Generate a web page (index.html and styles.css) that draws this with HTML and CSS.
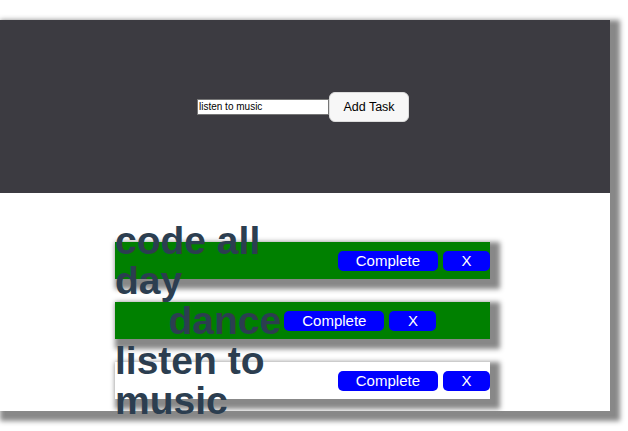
FILE: index.html
```html
<!DOCTYPE html>
<html>
<head>
<meta charset="utf-8">
<link rel="stylesheet" href="styles.css">
</head>
<body>
<div class="app">
  <header class="header">
    <input class="task-input" type="text" value="listen to music">
    <button class="add-btn">Add Task</button>
  </header>
  <ul class="list">
    <li class="task done">
      <h2 class="task-text">code all day</h2>
      <div class="actions"><button class="btn">Complete</button><button class="btn btn-x">X</button></div>
    </li>
    <li class="task done">
      <h2 class="task-text">dance</h2>
      <div class="actions"><button class="btn">Complete</button><button class="btn btn-x">X</button></div>
    </li>
    <li class="task">
      <h2 class="task-text">listen to music</h2>
      <div class="actions"><button class="btn">Complete</button><button class="btn btn-x">X</button></div>
    </li>
  </ul>
</div>
</body>
</html>
```
FILE: styles.css
```css
html, body {
  margin: 0;
  padding: 0;
  background: #fff;
  font-family: "Liberation Sans", Arial, sans-serif;
}
body {
  box-sizing: border-box;
  min-height: 100vh;
  padding-top: 20px;
}
.app {
  width: 610px;
  background: #fff;
  box-shadow: 5px 5px 5px 5px #888;
}
.header {
  height: 173px;
  background: #3c3b41;
  display: flex;
  align-items: center;
  justify-content: center;
  padding-right: 4px;
}
.task-input {
  box-sizing: border-box;
  width: 132px;
  height: 16px;
  margin: 0;
  padding: 0 1px;
  border: 1px solid #767676;
  border-radius: 0;
  font: 10px "Liberation Sans", Arial, sans-serif;
  color: #000;
  background: #fff;
}
.add-btn {
  box-sizing: border-box;
  width: 80px;
  height: 30px;
  margin: 0;
  padding: 0;
  border: 1px solid #dcdcdc;
  border-radius: 6px;
  background: #f7f7f7;
  font: 12.5px "Liberation Sans", Arial, sans-serif;
  color: #000;
}
.list {
  list-style: none;
  margin: 0;
  padding: 49px 120px 12px 115px;
}
.task {
  height: 37px;
  margin-bottom: 23px;
  display: flex;
  align-items: center;
  justify-content: center;
  background: #fff;
  box-shadow: 5px 5px 5px 5px #888;
}
.task:last-child {
  margin-bottom: 0;
}
.task.done {
  background: #008000;
}
.task-text {
  margin: 0;
  font-size: 39px;
  line-height: 40px;
  font-weight: bold;
  color: #2c3e50;
}
.actions {
  display: flex;
  gap: 5px;
  margin-left: 3px;
  flex-shrink: 0;
}
.btn {
  height: 20px;
  margin: 0;
  padding: 0 18px;
  border: none;
  border-radius: 5px;
  background: #0000ff;
  color: #fff;
  font: 15px "Liberation Sans", Arial, sans-serif;
  line-height: 20px;
}
.btn-x {
  padding: 0 18.5px;
}
```
